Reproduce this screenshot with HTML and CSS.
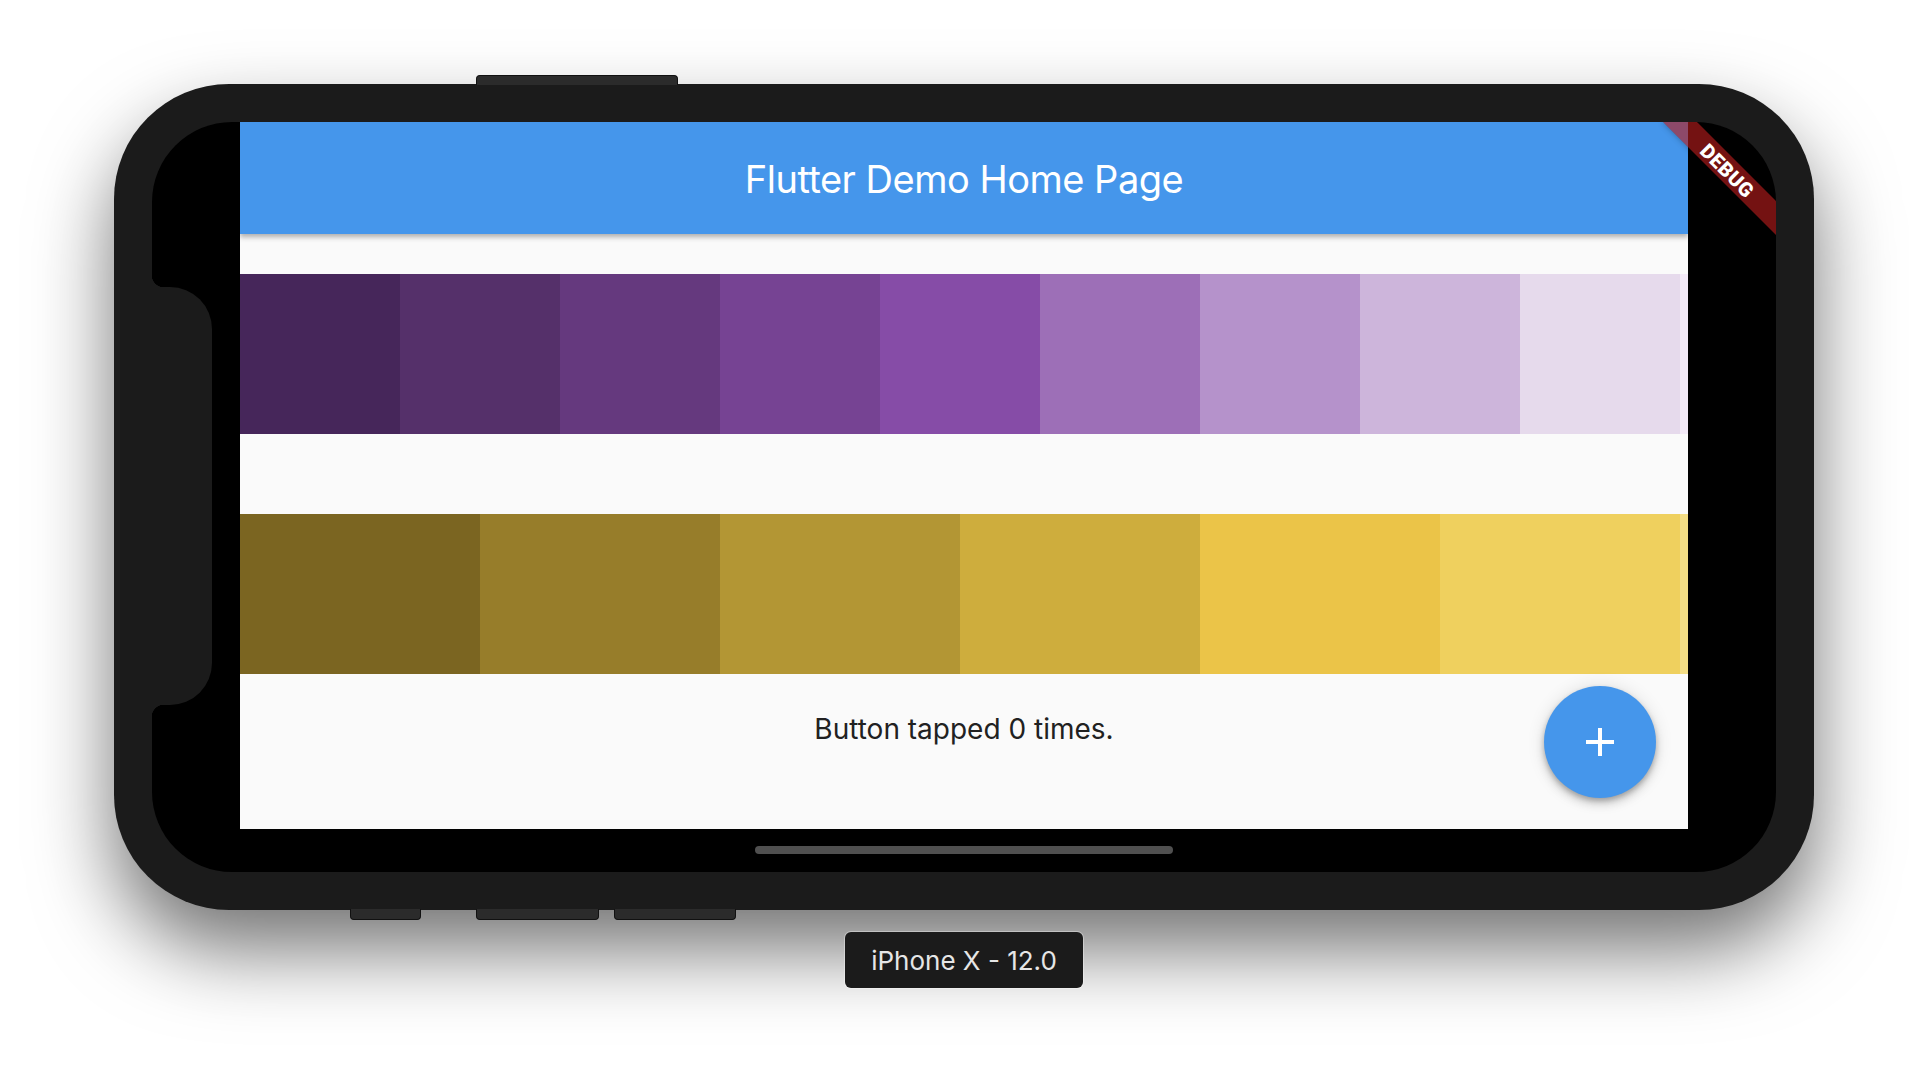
FILE: index.html
```html
<!DOCTYPE html>
<html lang="en">
<head>
<meta charset="utf-8">
<title>Flutter Demo Home Page</title>
<link rel="stylesheet" href="styles.css">
</head>
<body>
<div class="stage">
  <div class="device">
    <div class="hw hw-top"></div>
    <div class="hw hw-b1"></div>
    <div class="hw hw-b2"></div>
    <div class="hw hw-b3"></div>
    <div class="screen">
      <div class="housing"></div>
      <div class="app">
        <header class="appbar"><h1 class="appbar-title">Flutter Demo Home Page</h1></header>
        <main class="content">
          <div class="swatches">
            <div class="sw" style="background:#46265a"></div>
            <div class="sw" style="background:#55306a"></div>
            <div class="sw" style="background:#65397e"></div>
            <div class="sw" style="background:#764393"></div>
            <div class="sw" style="background:#864ca7"></div>
            <div class="sw" style="background:#9d6fb7"></div>
            <div class="sw" style="background:#b592cb"></div>
            <div class="sw" style="background:#cdb5db"></div>
            <div class="sw" style="background:#e6daec"></div>
            <div class="sw-rest" style="background:#f3eaf7"></div>
          </div>
          <div class="swatches swatches-wide">
            <div class="sw" style="background:#7b6521"></div>
            <div class="sw" style="background:#977d2a"></div>
            <div class="sw" style="background:#b39634"></div>
            <div class="sw" style="background:#cead3d"></div>
            <div class="sw" style="background:#ebc448"></div>
            <div class="sw" style="background:#efd05e"></div>
            <div class="sw-rest" style="background:#f3dd85"></div>
          </div>
          <p class="counter">Button tapped 0 times.</p>
        </main>
        <button class="fab" aria-label="Increment">
          <svg viewBox="0 0 24 24" width="48" height="48"><path d="M19 13h-6v6h-2v-6H5v-2h6V5h2v6h6v2z" fill="#fff"/></svg>
        </button>
      </div>
      <div class="home-indicator"></div>
      <div class="debug-banner">DEBUG</div>
    </div>
  </div>
  <div class="device-label">iPhone X - 12.0</div>
</div>
</body>
</html>
```
FILE: styles.css
```css
html, body {
  margin: 0;
  padding: 0;
  background: #ffffff;
  font-family: Inter, "Liberation Sans", sans-serif;
}

.stage {
  width: 1928px;
  height: 1090px;
  display: flex;
  flex-direction: column;
  align-items: center;
  padding-top: 84px;
  box-sizing: border-box;
  overflow: hidden;
}

.device {
  position: relative;
  width: 1700px;
  height: 826px;
  padding: 38px;
  box-sizing: border-box;
  background: #1b1b1b;
  border-radius: 115px;
  box-shadow: 0 40px 80px rgba(0, 0, 0, 0.55);
}

.hw {
  position: absolute;
  background: #2b2b2b;
  border: 1px solid #111;
  box-sizing: border-box;
}
.hw-top {
  left: 362px;
  top: -9px;
  width: 202px;
  height: 10px;
  border-radius: 4px 4px 0 0;
  border-bottom: none;
}
.hw-b1, .hw-b2, .hw-b3 {
  bottom: -10px;
  height: 11px;
  border-radius: 0 0 4px 4px;
  border-top: none;
}
.hw-b1 { left: 236px; width: 71px; }
.hw-b2 { left: 362px; width: 123px; }
.hw-b3 { left: 500px; width: 122px; }

.screen {
  position: relative;
  height: 100%;
  background: #000;
  border-radius: 80px;
  overflow: hidden;
  padding: 0 88px;
  display: flex;
  flex-direction: column;
  align-items: center;
}

.housing {
  position: absolute;
  left: 0;
  top: 165px;
  width: 60px;
  height: 418px;
  background: #1b1b1b;
  border-radius: 0 42px 42px 0;
}
.housing::before, .housing::after {
  content: "";
  position: absolute;
  left: 0;
  width: 12px;
  height: 12px;
}
.housing::before {
  top: -12px;
  background: radial-gradient(circle at 100% 0%, transparent 12px, #1b1b1b 12.5px);
}
.housing::after {
  bottom: -12px;
  background: radial-gradient(circle at 100% 100%, transparent 12px, #1b1b1b 12.5px);
}

.app {
  position: relative;
  width: 1448px;
  height: 707px;
  flex: none;
  background: #fafafa;
  display: flex;
  flex-direction: column;
}

.appbar {
  position: relative;
  z-index: 1;
  height: 112px;
  flex: none;
  background: #4596eb;
  display: flex;
  align-items: center;
  justify-content: center;
  box-shadow: 0 4px 5px rgba(0, 0, 0, 0.18), 0 2px 4px rgba(0, 0, 0, 0.14);
}
.appbar-title {
  margin: 0;
  color: #fff;
  font-family: Inter, "Liberation Sans", sans-serif;
  font-weight: 400;
  font-size: 38px;
  letter-spacing: -0.5px;
  line-height: 1;
  padding-top: 2px;
}

.content {
  flex: 1;
  padding-top: 40px;
  display: flex;
  flex-direction: column;
}

.swatches {
  display: flex;
  height: 160px;
  flex: none;
}
.swatches + .swatches { margin-top: 80px; }
.sw { width: 160px; flex: none; }
.swatches-wide .sw { width: 240px; }
.sw-rest { flex: 1; }

.counter {
  margin: 37px 0 0;
  line-height: 36px;
  text-align: center;
  font-size: 28px;
  color: #212121;
}

.fab {
  position: absolute;
  right: 32px;
  bottom: 31px;
  width: 112px;
  height: 112px;
  border: none;
  padding: 0;
  border-radius: 50%;
  background: #4596eb;
  display: flex;
  align-items: center;
  justify-content: center;
  box-shadow: 0 6px 10px rgba(0, 0, 0, 0.14), 0 1px 18px rgba(0, 0, 0, 0.12), 0 3px 5px rgba(0, 0, 0, 0.2);
}

.home-indicator {
  margin-top: 17px;
  width: 418px;
  height: 8px;
  border-radius: 4px;
  background: #505050;
  flex: none;
}

.debug-banner {
  position: absolute;
  z-index: 5;
  top: 36px;
  right: -32px;
  width: 160px;
  height: 24px;
  background: rgba(183, 28, 28, 0.63);
  transform: rotate(45deg);
  color: #fff;
  font-family: Roboto, "Liberation Sans", sans-serif;
  font-weight: 900;
  font-size: 20px;
  line-height: 26px;
  text-align: center;
  letter-spacing: 0.5px;
  box-shadow: 0 0 6px rgba(0, 0, 0, 0.3);
}

.device-label {
  margin-top: 22px;
  width: 238px;
  height: 56px;
  border-radius: 6px;
  background: #1b1b1b;
  box-shadow: 0 0 0 1px rgba(255, 255, 255, 0.35);
  color: #e6e6e6;
  font-family: Inter, "Liberation Sans", sans-serif;
  font-size: 26px;
  display: flex;
  align-items: center;
  justify-content: center;
  position: relative;
}
```
